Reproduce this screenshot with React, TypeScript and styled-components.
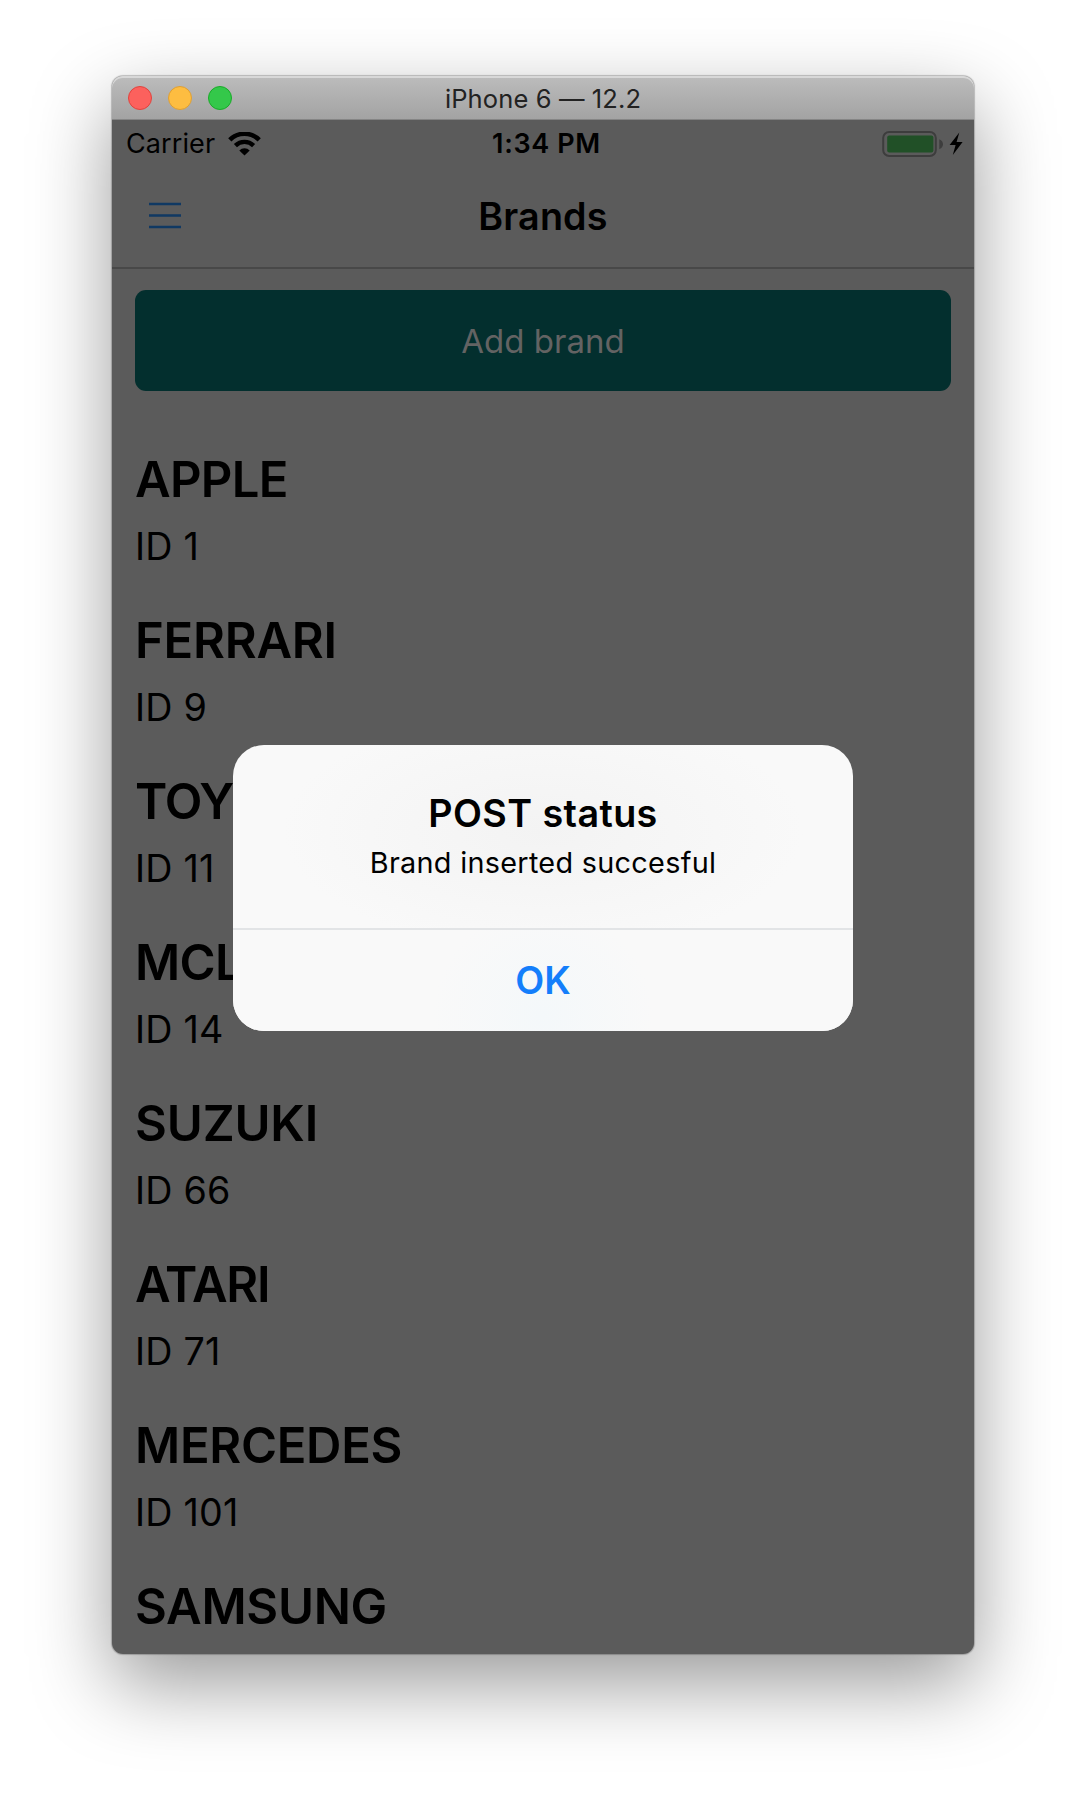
import React from "react";
import styled, { createGlobalStyle } from "styled-components";

const GlobalStyle = createGlobalStyle`
  * { box-sizing: border-box; }
  body { margin: 0; background: #fff; }
`;

const Desktop = styled.div`
  width: 1086px;
  height: 1802px;
  padding: 76px 112px 0;
  overflow: hidden;
  background: #fff;
  font-family: Inter, "Liberation Sans", sans-serif;
  color: #000;
`;

const Window = styled.div`
  width: 862px;
  height: 1578px;
  display: flex;
  flex-direction: column;
  border-radius: 11px;
  background: #5b5b5b;
  box-shadow: 0 0 1px 1px rgba(0, 0, 0, 0.22), 0 30px 80px rgba(0, 0, 0, 0.4);
`;

const TitleBar = styled.header`
  height: 44px;
  display: grid;
  grid-template-columns: 1fr auto 1fr;
  align-items: center;
  padding: 0 16px;
  border-radius: 11px 11px 0 0;
  border-bottom: 1px solid #858585;
  background: linear-gradient(#bcbcbc, #a3a3a3);
  box-shadow: inset 0 2px 0 #d8d8d8;
`;

const Lights = styled.div`
  display: flex;
  gap: 16px;
  padding-top: 1px;
`;

const Light = styled.span<{ $fill: string; $edge: string }>`
  width: 24px;
  height: 24px;
  border-radius: 50%;
  background: ${(p) => p.$fill};
  border: 1px solid ${(p) => p.$edge};
`;

const WindowTitle = styled.span`
  font-size: 25.5px;
  line-height: 32px;
  letter-spacing: 0.12px;
  padding-top: 2px;
  color: #222;
`;

const Phone = styled.main`
  position: relative;
  flex: 1;
  display: flex;
  flex-direction: column;
  min-height: 0;
`;

const StatusBar = styled.div`
  height: 48px;
  display: grid;
  grid-template-columns: 1fr auto 1fr;
  align-items: center;
  padding: 0 11px 0 14px;
  font-size: 27px;
  line-height: 32px;
`;

const Carrier = styled.div`
  display: flex;
  align-items: center;
  gap: 13px;
  letter-spacing: 0.1px;
`;

const Clock = styled.span`
  padding-left: 4px;
  font-weight: 600;
  letter-spacing: 0.65px;
`;

const Power = styled.div`
  display: flex;
  justify-content: flex-end;
`;

const NavBar = styled.nav`
  height: 101px;
  display: grid;
  grid-template-columns: 1fr auto 1fr;
  align-items: center;
  padding: 0 36px 3px;
  border-bottom: 2px solid #484848;
`;

const MenuButton = styled.button`
  padding: 0;
  border: 0;
  background: none;
  display: flex;
`;

const NavTitle = styled.h1`
  margin: 0;
  font-size: 37.7px;
  line-height: 46px;
  font-weight: 600;
  letter-spacing: 0.15px;
`;

const Content = styled.section`
  padding: 21px 23px 0;
  display: flex;
  flex-direction: column;
`;

const AddButton = styled.button`
  height: 101px;
  padding: 0;
  border: 0;
  border-radius: 11px;
  background: #032f2e;
  color: #636363;
  font-family: inherit;
  font-size: 33px;
  letter-spacing: 0;
`;

const BrandList = styled.ul`
  list-style: none;
  margin: 60px 0 0;
  padding: 0;
  display: flex;
  flex-direction: column;
  gap: 43px;
`;

const BrandRow = styled.li`
  display: flex;
  flex-direction: column;
  gap: 15px;
  white-space: nowrap;
`;

const BrandName = styled.span<{ $tracking: number }>`
  font-size: 49px;
  line-height: 58px;
  font-weight: 600;
  letter-spacing: ${(p) => p.$tracking}px;
`;

const BrandId = styled.span`
  font-size: 37.7px;
  line-height: 45px;
  letter-spacing: 0.2px;
`;

const Backdrop = styled.div`
  position: absolute;
  inset: 0;
  padding-top: 1px;
  display: flex;
  align-items: center;
  justify-content: center;
`;

const Alert = styled.div`
  width: 620px;
  height: 286px;
  display: flex;
  flex-direction: column;
  overflow: hidden;
  border-radius: 31px;
  text-align: center;
  background: radial-gradient(ellipse 260px 120px at 50% 30%, #f3f3f3, #f9f9f9);
`;

const AlertBody = styled.div`
  height: 185px;
  padding-top: 45px;
  display: flex;
  flex-direction: column;
  border-bottom: 2px solid #e2e4e6;
`;

const AlertTitle = styled.h2`
  margin: 0;
  font-size: 37.7px;
  line-height: 46px;
  font-weight: 600;
  letter-spacing: 0.4px;
`;

const AlertMessage = styled.p`
  margin: 9px 0 0;
  font-size: 28.8px;
  line-height: 36px;
  letter-spacing: 0.3px;
`;

const AlertAction = styled.button`
  flex: 1;
  padding: 0;
  border: 0;
  background: radial-gradient(ellipse 110px 110px at 50% 85%, #f4f8fa, #f9f9f9);
  color: #147efb;
  font-family: inherit;
  font-size: 37.7px;
  font-weight: 600;
  letter-spacing: 0;
`;

const brands = [
  { name: "APPLE", id: 1, tracking: -0.7 },
  { name: "FERRARI", id: 9, tracking: -0.25 },
  { name: "TOYOTA", id: 11, tracking: -1.1 },
  { name: "MCLAREN", id: 14, tracking: -0.6 },
  { name: "SUZUKI", id: 66, tracking: -0.15 },
  { name: "ATARI", id: 71, tracking: -1.25 },
  { name: "MERCEDES", id: 101, tracking: -0.3 },
];

const WifiIcon = () => (
  <svg width="33" height="24" viewBox="0 0 33 24" fill="none" stroke="#000">
    <path d="M1.8 7.8A21 21 0 0 1 31.2 7.8" strokeWidth="4.6" />
    <path d="M7.4 13.6A13 13 0 0 1 25.6 13.6" strokeWidth="4.4" />
    <path d="M16.5 23.6L11.3 18.4A7.6 7.6 0 0 1 21.7 18.4Z" fill="#000" stroke="none" />
  </svg>
);

const MenuIcon = () => (
  <svg width="34" height="28" viewBox="0 0 34 28" stroke="#103963" strokeWidth="2.4">
    <path d="M1 2H33M1 13.5H33M1 25H33" />
  </svg>
);

const BatteryIcon = () => (
  <svg width="81" height="27" viewBox="0 0 81 27">
    <rect x="1.2" y="1" width="52.6" height="24" rx="6" fill="none" stroke="#3d3d3d" strokeWidth="2" />
    <rect x="5.2" y="4.4" width="46.2" height="17.2" rx="2" fill="#215027" />
    <path d="M57.3 8.2Q61 9.8 61 13.2T57.3 18.2Z" fill="#3d3d3d" />
    <path d="M77.3 1.4L67.6 14H73.6L70.8 24L80.6 11H74.6Z" fill="#000" />
  </svg>
);

export default function App() {
  return (
    <>
      <GlobalStyle />
      <Desktop>
        <Window>
          <TitleBar>
            <Lights>
              <Light $fill="#fc615d" $edge="#e0443e" />
              <Light $fill="#fdbd41" $edge="#de9f34" />
              <Light $fill="#34c84a" $edge="#1aab29" />
            </Lights>
            <WindowTitle>iPhone 6 — 12.2</WindowTitle>
          </TitleBar>
          <Phone>
            <StatusBar>
              <Carrier>
                Carrier
                <WifiIcon />
              </Carrier>
              <Clock>1:34 PM</Clock>
              <Power>
                <BatteryIcon />
              </Power>
            </StatusBar>
            <NavBar>
              <MenuButton aria-label="Menu">
                <MenuIcon />
              </MenuButton>
              <NavTitle>Brands</NavTitle>
            </NavBar>
            <Content>
              <AddButton>Add brand</AddButton>
              <BrandList>
                {brands.map((brand) => (
                  <BrandRow key={brand.id}>
                    <BrandName $tracking={brand.tracking}>{brand.name}</BrandName>
                    <BrandId>ID {brand.id}</BrandId>
                  </BrandRow>
                ))}
                <BrandRow>
                  <BrandName $tracking={-0.3}>SAMSUNG</BrandName>
                </BrandRow>
              </BrandList>
            </Content>
            <Backdrop>
              <Alert role="alertdialog">
                <AlertBody>
                  <AlertTitle>POST status</AlertTitle>
                  <AlertMessage>Brand inserted succesful</AlertMessage>
                </AlertBody>
                <AlertAction>OK</AlertAction>
              </Alert>
            </Backdrop>
          </Phone>
        </Window>
      </Desktop>
    </>
  );
}
